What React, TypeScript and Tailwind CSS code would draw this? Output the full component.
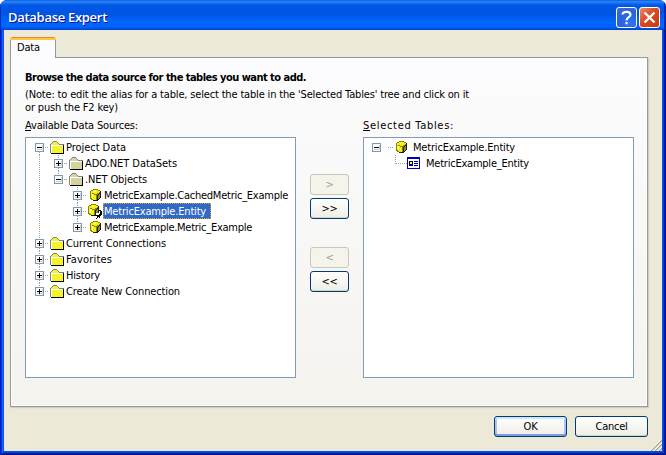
import React from "react";

const F = "font-['DejaVu_Sans_Condensed','DejaVu_Sans',sans-serif] [font-stretch:condensed]";
const VDOT = "bg-[repeating-linear-gradient(to_bottom,#a0a0a0_0_1px,transparent_1px_2px)]";
const HDOT = "bg-[repeating-linear-gradient(to_right,#a0a0a0_0_1px,transparent_1px_2px)]";

function Label({ w, children, bold = false }: { w: number; children: React.ReactNode; bold?: boolean }) {
  const ref = React.useRef<HTMLSpanElement>(null);
  const [sp, setSp] = React.useState(0);
  React.useLayoutEffect(() => {
    const el = ref.current;
    if (!el) return;
    const n = (el.textContent || "").length;
    setSp((w - el.getBoundingClientRect().width) / n);
  }, [w]);
  return (
    <span ref={ref} className={"inline-block whitespace-pre " + (bold ? "font-bold" : "")} style={{ letterSpacing: sp }}>
      {children}
    </span>
  );
}

function Box({ open }: { open?: boolean }) {
  return (
    <svg width="9" height="9" shapeRendering="crispEdges" className="block shrink-0">
      <rect x="0.5" y="0.5" width="8" height="8" rx="1" fill="#fbfaf8" stroke="#7b9ab5" />
      <path d="M2 7h6v-5h-1v4h-5z" fill="#d5d0c4" />
      <path d={open ? "M2 4h5v1h-5z" : "M2 4h5v1h-5z M4 2h1v5h-1z"} fill="#000" />
    </svg>
  );
}

function Folder({ pale }: { pale?: boolean }) {
  const id = pale ? "dither-pale" : "dither";
  return (
    <svg width="16" height="13" shapeRendering="crispEdges" className="mt-[2px] block shrink-0 self-start">
      <defs>
        <pattern id={id} width="2" height="2" patternUnits="userSpaceOnUse">
          <rect width="2" height="2" fill={pale ? "#cfcfc8" : "#ffff00"} />
          <path d="M0 0h1v1h-1z M1 1h1v1h-1z" fill={pale ? "#d8d878" : "#e8e860"} />
        </pattern>
      </defs>
      <path d="M1 3h1v-1h1v-1h5v1h1v1h5v9h-13z" fill={"url(#" + id + ")"} />
      <path d="M0 12v-9h1v-1h1v-1h1v-1h4v1h1v1h1v1h5v1h-5v-1h-1v-1h-1v-1h-4v1h-1v1h-1v9z" fill="#808080" />
      <path d="M1 4h12v1h-11v7h-1z" fill="#fff" />
      <path d="M1 12h12v-8h1v9h-13z" fill="#000" />
    </svg>
  );
}

const cylinderPixels = [
  "...ooooo...",
  ".ooyywyyoo.",
  "oyyywyyyyyk",
  "oyyyyyyyyok",
  "oyooyyyookk",
  "oywyooookgk",
  "oywyyyokogk",
  "oywyyyokgok",
  "oywyyyokogk",
  "ooyyyyokgk.",
  ".ooyyyokk..",
  "...kkkkk...",
];
const ink: Record<string, string> = { o: "#8a8400", y: "#f4ee10", w: "#ffffc8", k: "#1c1c10", g: "#909070" };

function Cylinder({ link }: { link?: boolean }) {
  const dx = link ? 0 : 2;
  const dy = link ? 1 : 2;
  return (
    <svg width="16" height="16" shapeRendering="crispEdges" className="block shrink-0">
      {cylinderPixels.flatMap((line, y) =>
        line.split("").map((c, x) =>
          c === "." ? null : <rect key={x + "-" + y} x={x + dx} y={y + dy} width="1" height="1" fill={ink[c]} />,
        ),
      )}
      {link && (
        <>
          <path d="M8 10h7v6h-7z" fill="#fff" />
          <path d="M11 7h2v1h1v4h-1v1h-1v2h-1v-1h-1v1h-1v1h-1v-1h1v-2h-1v-1h3v-1h1v-3h-1z" fill="#000" />
        </>
      )}
    </svg>
  );
}

const rows = [
  { t: "Project Data", w: 60, d: 0, k: "f", open: true, first: true },
  { t: "ADO.NET DataSets", w: 92, d: 1, k: "g" },
  { t: ".NET Objects", w: 62, d: 1, k: "g", open: true, last: true },
  { t: "MetricExample.CachedMetric_Example", w: 184, d: 2, k: "c" },
  { t: "MetricExample.Entity", w: 102, d: 2, k: "l" },
  { t: "MetricExample.Metric_Example", w: 148, d: 2, k: "c", last: true },
  { t: "Current Connections", w: 100, d: 0, k: "f" },
  { t: "Favorites", w: 46, d: 0, k: "f" },
  { t: "History", w: 34, d: 0, k: "f" },
  { t: "Create New Connection", w: 114, d: 0, k: "f", last: true },
];

function TreeRow({ r }: { r: { t: string; w: number; d: number; k: string; open?: boolean; first?: boolean; last?: boolean } }) {
  const sel = r.k === "l";
  const folder = r.k === "f" || r.k === "g";
  return (
    <div className="flex h-4 items-center pl-[9px]">
      {r.d > 0 && (
        <span className="flex h-4 w-[19px] shrink-0 pl-[4px]">
          <span className={"h-4 w-px " + VDOT} />
        </span>
      )}
      {r.d > 1 && <span className="w-[19px] shrink-0" />}
      <span className="flex h-4 flex-col items-center">
        <span className={"h-[4px] w-px " + (r.first ? "" : VDOT)} />
        <Box open={r.open} />
        <span className={"h-[3px] w-px " + (r.last ? "" : VDOT)} />
      </span>
      <span className={"mt-[8px] mr-[1px] ml-px h-px w-[4px] self-start " + HDOT} />
      {folder ? <Folder pale={r.k === "g"} /> : <Cylinder link={sel} />}
      <span className={"flex h-[16px] items-center leading-[15px] " + (sel ? "-ml-px w-[108px] bg-[#316ac5] pl-px text-white outline-1 -outline-offset-1 outline-dotted outline-[#d9a038]" : "")}>
        <Label w={r.w}>{r.t}</Label>
      </span>
    </div>
  );
}

function Btn({ t, w, kind = "normal", size }: { t: string; w: number; kind?: "normal" | "off" | "default"; size: string }) {
  const look =
    kind === "off"
      ? "border-[#c9c7ba] bg-[#f5f4ea] text-[#a1a192]"
      : kind === "default"
        ? "border-[#003c74] bg-gradient-to-b from-white to-[#eeede5] shadow-[inset_0_2px_0_#cee7ff,inset_0_-2px_0_#7f9be8,inset_2px_0_0_#a8c3f6,inset_-2px_0_0_#a8c3f6]"
        : "border-[#003c74] bg-gradient-to-b from-white to-[#eeede5] shadow-[inset_0_-1px_0_#d6d0c5]";
  return (
    <button className={"flex items-center justify-center rounded-[3px] border leading-none " + size + " " + look}>
      <Label w={w}>{t}</Label>
    </button>
  );
}

export default function App() {
  return (
    <div className={"flex h-[455px] w-[666px] flex-col overflow-hidden rounded-t-[7px] bg-[#0831d9] text-[11px] leading-[13px] text-black " + F}>
      <header className="flex h-[30px] shrink-0 items-center bg-[linear-gradient(to_bottom,#0048d0_0,#2a85f8_1px,#1a74f4_3px,#0058e8_5px,#0054e0_14px,#0066ff_22px,#0064fc_27px,#0040d0_30px)] pt-[4px] pr-[6px] pl-2 shadow-[inset_1px_0_0_#0030c8,inset_-2px_0_0_#0028b0]">
        <h1 className="flex-1 font-['Open_Sans','Noto_Sans',sans-serif] text-[13px] font-semibold [font-stretch:normal] text-white [text-shadow:1px_1px_#0f1089]">
          <Label w={99}>Database Expert</Label>
        </h1>
        <div className="flex gap-[2px]">
          <button className="h-[21px] w-[21px] rounded-[3px] border border-white bg-[radial-gradient(circle_at_70%_80%,#2f75f5,#2663e0_50%,#3d6be0)]">
            <svg width="19" height="19" viewBox="0 0 19 19" fill="none" stroke="#fff" strokeWidth="2.1">
              <path d="M5.5 6.5C5.5 3 13.5 2.8 13.5 6.8C13.5 9.5 9.5 9 9.5 12.5M9.5 14v2.2" />
            </svg>
          </button>
          <button className="h-[21px] w-[21px] rounded-[3px] border border-white bg-[linear-gradient(135deg,#eb8b70,#da4a20_45%,#c93a12)]">
            <svg width="19" height="19" viewBox="0 0 19 19" stroke="#fff" strokeWidth="2.4">
              <path d="M4.5 4.5L14.5 14.5M14.5 4.5L4.5 14.5" />
            </svg>
          </button>
        </div>
      </header>
      <main className="flex min-h-0 flex-1 flex-col bg-[#ece9d8] pt-[7px] pr-[4px] pb-[4px] pl-[10px] shadow-[inset_1px_0_0_#0019cf,inset_-1px_-1px_0_#00138c,inset_2px_0_0_#0831d9,inset_-2px_-2px_0_#001ea0,inset_3px_0_0_#166aee,inset_-3px_-3px_0_#0441d8,inset_4px_0_0_#0855dd,inset_-4px_-4px_0_#0050ee]">
        <div className="z-10 -mb-px flex h-[21px] w-[46px] shrink-0 flex-col">
          <div className="mx-px h-px shrink-0 rounded-t-[2px] bg-[#e68b2c]" />
          <div className="h-[2px] shrink-0 bg-[#ffc73c]" />
          <div className="flex-1 border-x border-[#919b9c] bg-[#fcfcfe] pt-px pl-[6px]">
            <Label w={23}>Data</Label>
          </div>
        </div>
        <section className="flex h-[350px] w-[638px] shrink-0 flex-col border border-[#919b9c] bg-gradient-to-b from-[#fcfcfe] to-[#f4f3ee] pt-[13px] pl-[14px] shadow-[1px_1px_1px_#d0ceba,inset_-1px_-1px_0_#fff,inset_1px_0_0_#fff]">
          <p className="h-[17px]"><Label w={281} bold>Browse the data source for the tables you want to add.</Label></p>
          <p className="h-[13px]"><Label w={444}>(Note: to edit the alias for a table, select the table in the 'Selected Tables' tree and click on it</Label></p>
          <p className="h-[18px]"><Label w={93}>or push the F2 key)</Label></p>
          <div className="flex h-[18px]">
            <div className="w-[338px]"><Label w={113}><u>A</u>vailable Data Sources:</Label></div>
            <div><Label w={91}><u>S</u>elected Tables:</Label></div>
          </div>
          <div className="flex">
            <div className="h-[241px] w-[271px] border border-[#7f9db9] bg-white pt-px">
              {rows.map((r) => <TreeRow key={r.t} r={r} />)}
            </div>
            <div className="flex w-[67px] flex-col items-center pt-[37px]">
              <Btn t=">" w={8} kind="off" size="h-[21px] w-[39px]" />
              <div className="h-[3px]" />
              <Btn t=">>" w={16} size="h-[21px] w-[39px]" />
              <div className="h-[28px]" />
              <Btn t="<" w={8} kind="off" size="h-[21px] w-[39px]" />
              <div className="h-[3px]" />
              <Btn t="<<" w={16} size="h-[21px] w-[39px]" />
            </div>
            <div className="h-[241px] w-[271px] border border-[#7f9db9] bg-white pt-px">
              <div className="flex h-4 items-center pl-[8px]">
                <span className="mt-[4px] self-start"><Box open /></span>
                <span className={"mt-[8px] ml-[7px] h-px w-[6px] self-start " + HDOT} />
                <Cylinder />
                <span className="ml-[3px]"><Label w={102}>MetricExample.Entity</Label></span>
              </div>
              <div className="flex h-4 pl-[31px]">
                <span className={"h-[9px] w-px " + VDOT} />
                <span className={"mt-[8px] h-px w-[11px] " + HDOT} />
                <svg width="13" height="12" shapeRendering="crispEdges" className="mt-[2px] shrink-0">
                  <path d="M0 0h13v12h-13z" fill="#0000c0" />
                  <path d="M1 2h11v9h-11z" fill="#fff" />
                  <path d="M2 4h4v5h-4z M7 4h4v1h-4z M7 6h4v1h-4z M7 8h4v1h-4z" fill="#0000a0" />
                  <path d="M3 5h2v2h-2z" fill="#ffff00" />
                </svg>
                <span className="ml-[6px] pt-[2px]"><Label w={103}>MetricExample_Entity</Label></span>
              </div>
            </div>
          </div>
        </section>
        <footer className="flex min-h-0 flex-1 justify-end pt-[9px]">
          <Btn t="OK" w={14} kind="default" size="mr-[8px] h-[21px] w-[73px]" />
          <Btn t="Cancel" w={32} size="mr-[2px] h-[21px] w-[73px]" />
          <svg width="12" height="12" className="self-end" strokeWidth="1.3">
            <path d="M1 12L12 1M5 12L12 5M9 12L12 9" stroke="#a39f8c" />
            <path d="M0 12L12 0M4 12L12 4M8 12L12 8" stroke="#fff" strokeWidth="0.8" />
          </svg>
        </footer>
      </main>
    </div>
  );
}
